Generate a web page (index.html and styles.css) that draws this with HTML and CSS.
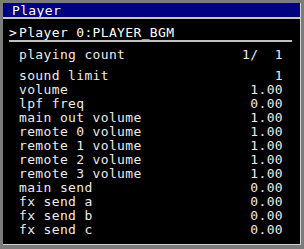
FILE: index.html
```html
<!DOCTYPE html>
<html lang="en">
<head>
    <meta charset="UTF-8">
    <title>Player</title>
    <link rel="stylesheet" href="styles.css">
</head>
<body>
    <div class="window">
        <div class="titlebar">Player</div>

        <div class="panel">
            <div class="header"><span class="cursor">&gt;</span>Player 0:PLAYER_BGM</div>

            <div class="row count">
                <span>playing count</span>
                <span class="value">1/  1</span>
            </div>

            <!-- parameter list -->
            <div class="params">
                <div class="row"><span>sound limit</span><span class="value">1</span></div>
                <div class="row"><span>volume</span><span class="value">1.00</span></div>
                <div class="row"><span>lpf freq</span><span class="value">0.00</span></div>
                <div class="row"><span>main out volume</span><span class="value">1.00</span></div>
                <div class="row"><span>remote 0 volume</span><span class="value">1.00</span></div>
                <div class="row"><span>remote 1 volume</span><span class="value">1.00</span></div>
                <div class="row"><span>remote 2 volume</span><span class="value">1.00</span></div>
                <div class="row"><span>remote 3 volume</span><span class="value">1.00</span></div>
                <div class="row"><span>main send</span><span class="value">0.00</span></div>
                <div class="row"><span>fx send a</span><span class="value">0.00</span></div>
                <div class="row"><span>fx send b</span><span class="value">0.00</span></div>
                <div class="row"><span>fx send c</span><span class="value">0.00</span></div>
            </div>
        </div>
    </div>
</body>
</html>
```

FILE: styles.css
```css
body {
    margin: 0;
    padding: 0;
    background: #7c7c7c;
    font-family: 'DejaVu Sans Mono', 'Liberation Mono', monospace;
    font-size: 13px;
    letter-spacing: 0.35px;
    color: #ececec;
    overflow: hidden;
}

.window {
    width: 304px;
    height: 249px;
    box-sizing: border-box;
    padding: 3px 3px 4px 3px;
    display: flex;
    flex-direction: column;
}

.titlebar {
    height: 14px;
    box-sizing: border-box;
    padding: 2px 0 0 9px;
    line-height: 12px;
    background: #000080;
    color: #ffffff;
    border-right: 1px solid #d4d4d4;
}

.panel {
    flex: 1;
    background: #000000;
    border-top: 2px solid #c8c8c8;
    border-right: 1px solid #d4d4d4;
    border-bottom: 1px solid #d4d4d4;
    padding: 7px 17px 0 16px;
}

.header {
    margin: 0 -9px 0 -10px;
    line-height: 14px;
    border-bottom: 2px solid #c0c0c0;
    color: #ffffff;
}

.cursor {
    display: inline-block;
    width: 10px;
}

.row {
    display: flex;
    justify-content: space-between;
    line-height: 14px;
    height: 14px;
}

.count {
    margin-top: 6px;
}

.params {
    margin-top: 7px;
}

.value {
    white-space: pre;
}
```
